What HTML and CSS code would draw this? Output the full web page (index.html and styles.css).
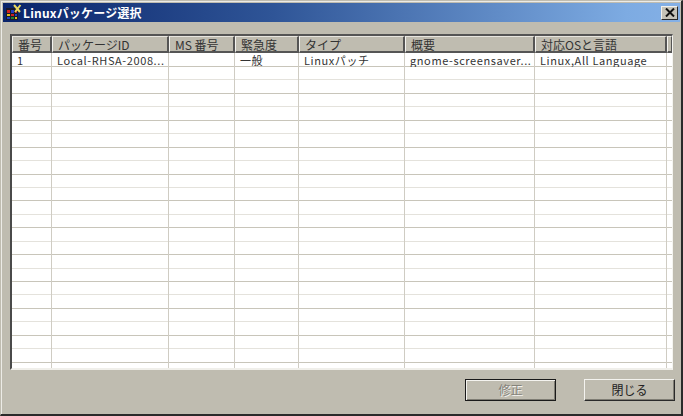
FILE: index.html
```html
<!DOCTYPE html>
<html lang="ja">
<head>
<meta charset="utf-8">
<title>Linuxパッケージ選択</title>
<link rel="stylesheet" href="styles.css">
</head>
<body>
<div class="window">
  <div class="titlebar">
    <svg class="appicon" width="17" height="17" viewBox="0 0 17 17">
      <rect x="1" y="4" width="12" height="12" fill="#1a1a2a"/>
      <rect x="2" y="6" width="3" height="3" fill="#d02020"/>
      <rect x="6" y="6" width="3" height="3" fill="#2040c0"/>
      <rect x="10" y="6" width="2" height="3" fill="#c02020"/>
      <rect x="2" y="10" width="3" height="2" fill="#e0c020"/>
      <rect x="6" y="10" width="3" height="2" fill="#d02020"/>
      <rect x="10" y="10" width="2" height="2" fill="#2040c0"/>
      <rect x="2" y="13" width="3" height="2" fill="#2040c0"/>
      <rect x="6" y="13" width="3" height="2" fill="#208030"/>
      <rect x="10" y="13" width="2" height="2" fill="#e0c020"/>
      <path d="M9 1 L15 8 M15.500 1 L10 8" stroke="#e8d860" stroke-width="2" fill="none"/>
    </svg>
    <span class="title">Linuxパッケージ選択</span>
    <button class="close"><svg width="10" height="9" viewBox="0 0 10 9"><path d="M1 0.500 L9 8.500 M9 0.500 L1 8.500" stroke="#111" stroke-width="2" fill="none"/></svg></button>
  </div>
  <div class="body">
    <div class="list">
      <div class="head">
        <div class="hc c1">番号</div>
        <div class="hc c2">パッケージID</div>
        <div class="hc c3">MS 番号</div>
        <div class="hc c4">緊急度</div>
        <div class="hc c5">タイプ</div>
        <div class="hc c6">概要</div>
        <div class="hc c7">対応OSと言語</div>
        <div class="hc c8"></div>
      </div>
      <div class="rows">
        <div class="row"><div class="td c1">1</div><div class="td c2">Local-RHSA-2008...</div><div class="td c3"></div><div class="td c4">一般</div><div class="td c5">Linuxパッチ</div><div class="td c6">gnome-screensaver...</div><div class="td c7">Linux,All Language</div></div>
        <div class="row"><div class="td c1"></div><div class="td c2"></div><div class="td c3"></div><div class="td c4"></div><div class="td c5"></div><div class="td c6"></div><div class="td c7"></div></div>
        <div class="row"><div class="td c1"></div><div class="td c2"></div><div class="td c3"></div><div class="td c4"></div><div class="td c5"></div><div class="td c6"></div><div class="td c7"></div></div>
        <div class="row"><div class="td c1"></div><div class="td c2"></div><div class="td c3"></div><div class="td c4"></div><div class="td c5"></div><div class="td c6"></div><div class="td c7"></div></div>
        <div class="row"><div class="td c1"></div><div class="td c2"></div><div class="td c3"></div><div class="td c4"></div><div class="td c5"></div><div class="td c6"></div><div class="td c7"></div></div>
        <div class="row"><div class="td c1"></div><div class="td c2"></div><div class="td c3"></div><div class="td c4"></div><div class="td c5"></div><div class="td c6"></div><div class="td c7"></div></div>
        <div class="row"><div class="td c1"></div><div class="td c2"></div><div class="td c3"></div><div class="td c4"></div><div class="td c5"></div><div class="td c6"></div><div class="td c7"></div></div>
        <div class="row"><div class="td c1"></div><div class="td c2"></div><div class="td c3"></div><div class="td c4"></div><div class="td c5"></div><div class="td c6"></div><div class="td c7"></div></div>
        <div class="row"><div class="td c1"></div><div class="td c2"></div><div class="td c3"></div><div class="td c4"></div><div class="td c5"></div><div class="td c6"></div><div class="td c7"></div></div>
        <div class="row"><div class="td c1"></div><div class="td c2"></div><div class="td c3"></div><div class="td c4"></div><div class="td c5"></div><div class="td c6"></div><div class="td c7"></div></div>
        <div class="row"><div class="td c1"></div><div class="td c2"></div><div class="td c3"></div><div class="td c4"></div><div class="td c5"></div><div class="td c6"></div><div class="td c7"></div></div>
        <div class="row"><div class="td c1"></div><div class="td c2"></div><div class="td c3"></div><div class="td c4"></div><div class="td c5"></div><div class="td c6"></div><div class="td c7"></div></div>
        <div class="row"><div class="td c1"></div><div class="td c2"></div><div class="td c3"></div><div class="td c4"></div><div class="td c5"></div><div class="td c6"></div><div class="td c7"></div></div>
        <div class="row"><div class="td c1"></div><div class="td c2"></div><div class="td c3"></div><div class="td c4"></div><div class="td c5"></div><div class="td c6"></div><div class="td c7"></div></div>
        <div class="row"><div class="td c1"></div><div class="td c2"></div><div class="td c3"></div><div class="td c4"></div><div class="td c5"></div><div class="td c6"></div><div class="td c7"></div></div>
        <div class="row"><div class="td c1"></div><div class="td c2"></div><div class="td c3"></div><div class="td c4"></div><div class="td c5"></div><div class="td c6"></div><div class="td c7"></div></div>
        <div class="row"><div class="td c1"></div><div class="td c2"></div><div class="td c3"></div><div class="td c4"></div><div class="td c5"></div><div class="td c6"></div><div class="td c7"></div></div>
        <div class="row"><div class="td c1"></div><div class="td c2"></div><div class="td c3"></div><div class="td c4"></div><div class="td c5"></div><div class="td c6"></div><div class="td c7"></div></div>
        <div class="row"><div class="td c1"></div><div class="td c2"></div><div class="td c3"></div><div class="td c4"></div><div class="td c5"></div><div class="td c6"></div><div class="td c7"></div></div>
        <div class="row"><div class="td c1"></div><div class="td c2"></div><div class="td c3"></div><div class="td c4"></div><div class="td c5"></div><div class="td c6"></div><div class="td c7"></div></div>
        <div class="row"><div class="td c1"></div><div class="td c2"></div><div class="td c3"></div><div class="td c4"></div><div class="td c5"></div><div class="td c6"></div><div class="td c7"></div></div>
        <div class="row"><div class="td c1"></div><div class="td c2"></div><div class="td c3"></div><div class="td c4"></div><div class="td c5"></div><div class="td c6"></div><div class="td c7"></div></div>
        <div class="row"><div class="td c1"></div><div class="td c2"></div><div class="td c3"></div><div class="td c4"></div><div class="td c5"></div><div class="td c6"></div><div class="td c7"></div></div>
        <div class="row"><div class="td c1"></div><div class="td c2"></div><div class="td c3"></div><div class="td c4"></div><div class="td c5"></div><div class="td c6"></div><div class="td c7"></div></div>
      </div>
    </div>
    <div class="actions">
      <button class="btn default" disabled>修正</button>
      <button class="btn">閉じる</button>
    </div>
  </div>
</div>
</body>
</html>
```
FILE: styles.css
```css
* { box-sizing: border-box; }
html, body { margin: 0; padding: 0; }
body {
  width: 683px;
  height: 416px;
  overflow: hidden;
  font-family: "Noto Sans CJK JP", "Liberation Sans", sans-serif;
  font-size: 12px;
  color: #2a2a2a;
}
.window {
  width: 683px;
  height: 416px;
  display: flex;
  flex-direction: column;
  background: #bfbcb0;
  border-top: 1px solid #bfbcb0;
  border-left: 1px solid #bfbcb0;
  border-right: 2px solid #2a2a2a;
  border-bottom: 2px solid #2a2a2a;
  box-shadow: inset 1px 1px 0 #ecebe6;
  padding: 2px 1px 1px 2px;
}
.titlebar {
  height: 19px;
  flex: none;
  display: flex;
  align-items: center;
  padding-left: 2px;
  padding-right: 2px;
  background: linear-gradient(to right, #0a246a, #2f5597 40%, #7dabe2 92%, #84b0e6);
  color: #fff;
}
.appicon { flex: none; }
.title {
  margin-left: 1px;
  font-weight: 700;
  font-size: 12px;
  line-height: 17px;
  flex: 1;
  letter-spacing: 0.2px;
}
.close {
  flex: none;
  width: 17px;
  height: 14px;
  padding: 0;
  display: flex;
  align-items: center;
  justify-content: center;
  background: #c6c3b8;
  border: 1px solid;
  border-color: #f2f1ec #2a2a2a #2a2a2a #f2f1ec;
}
.body {
  flex: 1;
  display: flex;
  flex-direction: column;
  padding: 12px 7px 12px 7px;
}
.list {
  width: 663px;
  height: 336px;
  flex: none;
  display: flex;
  flex-direction: column;
  overflow: hidden;
  background: #fff;
  border-top: 2px solid #555;
  border-left: 2px solid #4a4a4a;
  border-right: 1px solid #f4f4f0;
  border-bottom: 2px solid #f0efea;
}
.head {
  display: flex;
  flex: none;
  height: 17px;
  background: #bfbcb0;
}
.hc {
  height: 17px;
  padding-left: 5px;
  line-height: 15px;
  font-size: 12px;
  color: #333;
  background: #bfbcb0;
  border-top: 1px solid #e8e6e0;
  border-left: 1px solid #f4f3ef;
  border-right: 2px solid #555;
  border-bottom: 2px solid #555;
  white-space: nowrap;
}
.rows { flex: 1; overflow: hidden; }
.row {
  display: flex;
  height: 13.45px;
  border-bottom: 1px solid #c8c5ba;
}
.row:first-child { height: 14px; }
.row:nth-child(even) { border-bottom-color: #e4e2dc; }
.td {
  height: 14px;
  padding-left: 5px;
  line-height: 14px;
  font-size: 11px;
  letter-spacing: 0.6px;
  white-space: nowrap;
  overflow: hidden;
  border-right: 1px solid #cfccc3;
  color: #333;
}
.c1 { width: 40px; }
.c2 { width: 117px; }
.c3 { width: 66px; }
.c4 { width: 64px; }
.c5 { width: 106px; }
.c6 { width: 130px; }
.c7 { width: 132px; }
.c8 { flex: 1; padding: 0; border-right-width: 1px; }
.actions {
  flex: none;
  display: flex;
  justify-content: flex-end;
  gap: 28px;
  margin-top: 9px;
  padding-right: 0;
  width: 665px;
}
.btn {
  width: 91px;
  height: 22px;
  padding: 0;
  font-family: inherit;
  font-size: 12px;
  line-height: 18px;
  color: #222;
  background: #bfbcb0;
  border: 1px solid;
  border-color: #f4f3ef #2a2a2a #2a2a2a #f4f3ef;
  box-shadow: inset -1px -1px 0 #7f7d74;
}
.btn.default {
  border: 1px solid #1a1a1a;
  box-shadow: inset 1px 1px 0 #f4f3ef, inset -1px -1px 0 #7f7d74;
}
.btn:disabled {
  color: #85837a;
  text-shadow: 1px 1px 0 #f4f3ef;
}
```
